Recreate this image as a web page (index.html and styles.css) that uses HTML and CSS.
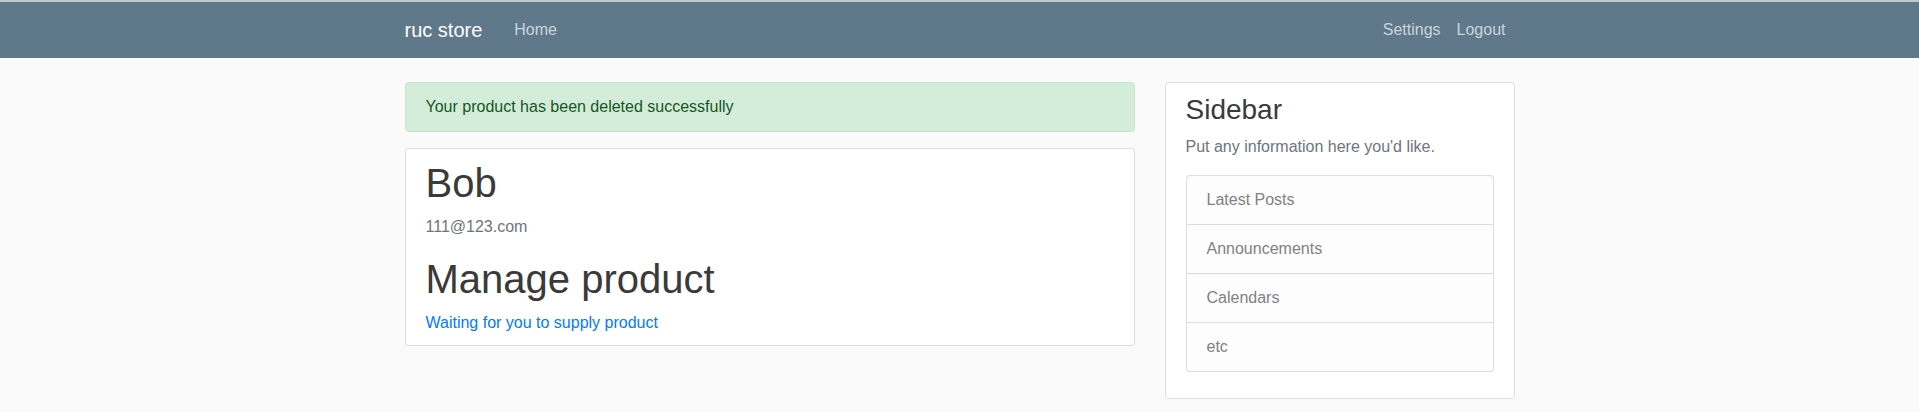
FILE: index.html
```html
<!DOCTYPE html>
<html lang="en">
<head>
<meta charset="utf-8">
<title>ruc store</title>
<link rel="stylesheet" href="styles.css">
</head>
<body>
<div class="topline"></div>
<header class="site-header">
  <nav class="navbar">
    <div class="container nav-inner">
      <a class="navbar-brand" href="#">ruc store</a>
      <div class="nav-left">
        <a class="nav-link" href="#">Home</a>
      </div>
      <div class="nav-right">
        <a class="nav-link" href="#">Settings</a>
        <a class="nav-link" href="#">Logout</a>
      </div>
    </div>
  </nav>
</header>
<main class="container">
  <div class="row">
    <div class="col-main">
      <div class="alert-success">Your product has been deleted successfully</div>
      <div class="content-section">
        <h1 class="heading">Bob</h1>
        <p class="text-secondary">111@123.com</p>
        <h1 class="heading">Manage product</h1>
        <a class="link" href="#">Waiting for you to supply product</a>
      </div>
    </div>
    <div class="col-side">
      <div class="content-section sidebar">
        <h3 class="side-title">Sidebar</h3>
        <p class="text-muted">Put any information here you'd like.</p>
        <ul class="list-group">
          <li class="list-group-item">Latest Posts</li>
          <li class="list-group-item">Announcements</li>
          <li class="list-group-item">Calendars</li>
          <li class="list-group-item">etc</li>
        </ul>
      </div>
    </div>
  </div>
</main>
</body>
</html>
```

FILE: styles.css
```css
* { box-sizing: border-box; }
html, body { margin: 0; padding: 0; }
body {
  background: #fafafa;
  color: #3a3a3a;
  font-family: "Liberation Sans", Arial, sans-serif;
  font-size: 16px;
  line-height: 1.5;
}
.topline { height: 2px; background: #c3c7cb; }
.site-header .navbar {
  background: #5f788a;
  padding: 8px 0;
  height: 56px;
}
.container {
  width: 1140px;
  margin: 0 auto;
  padding: 0 15px;
}
.nav-inner { display: flex; align-items: center; }
.navbar-brand {
  color: #ffffff;
  font-size: 20px;
  line-height: 30px;
  padding: 5px 0;
  margin-right: 24px;
  text-decoration: none;
}
.nav-left, .nav-right { display: flex; }
.nav-right { margin-left: auto; margin-right: 1px; }
.nav-link {
  color: #cbd5db;
  text-decoration: none;
  padding: 8px;
  line-height: 24px;
}
main.container { padding-top: 24px; }
.row { display: flex; margin: 0 -15px; }
.col-main { width: 760px; padding: 0 15px; }
.col-side { width: 380px; padding: 0 15px; }
.alert-success {
  background: #d4edda;
  border: 1px solid #c3e6cb;
  color: #155724;
  padding: 12px 20px;
  border-radius: 4px;
  margin-bottom: 16px;
}
.content-section {
  background: #ffffff;
  padding: 10px 20px;
  border: 1px solid #dddddd;
  border-radius: 3px;
  margin-bottom: 20px;
}
.heading {
  font-size: 40px;
  font-weight: 500;
  line-height: 1.2;
  margin: 0 0 8px;
}
.text-secondary { color: #6c757d; margin: 0 0 16px; }
.link { color: #007bff; text-decoration: none; }
.side-title {
  font-size: 28px;
  font-weight: 500;
  line-height: 1.2;
  margin: 0 0 8px;
}
.text-muted { color: #6c757d; margin: 0 0 16px; }
.list-group {
  list-style: none;
  margin: 0 0 16px;
  padding: 0;
  border-radius: 4px;
}
.list-group-item {
  background: #fdfdfe;
  color: #818182;
  padding: 12px 20px;
  border: 1px solid rgba(0,0,0,.125);
  margin-bottom: -1px;
}
.list-group-item:first-child { border-top-left-radius: 4px; border-top-right-radius: 4px; }
.list-group-item:last-child { border-bottom-left-radius: 4px; border-bottom-right-radius: 4px; margin-bottom: 0; }
```
